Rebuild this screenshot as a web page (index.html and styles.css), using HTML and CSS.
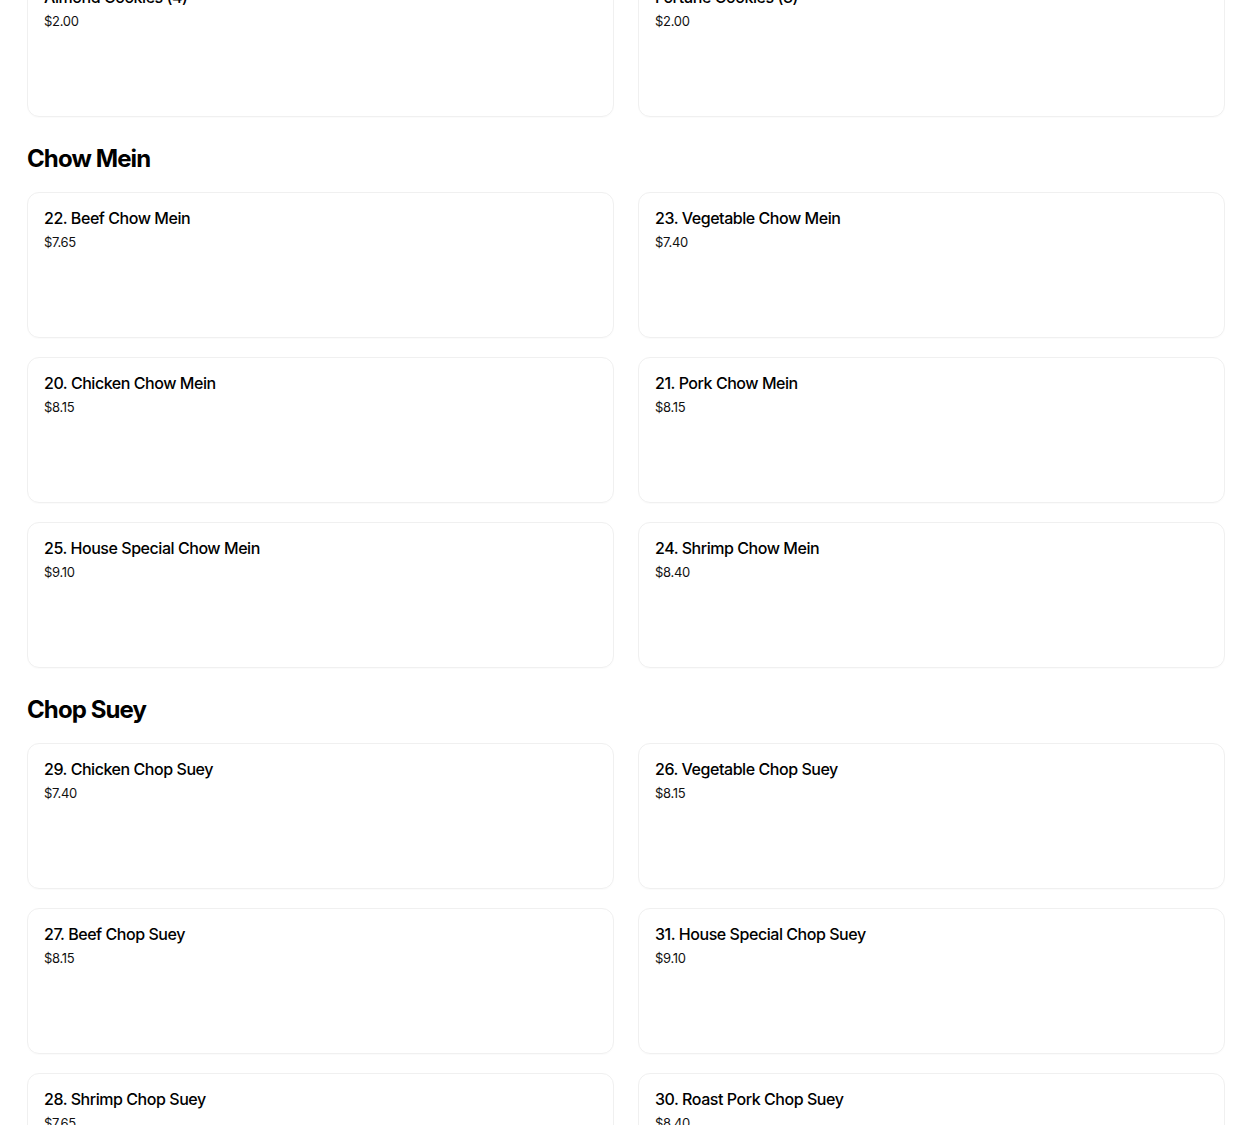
FILE: index.html
```html
<!DOCTYPE html>
<html>
<head>
<meta charset="utf-8">
<link rel="stylesheet" href="styles.css">
</head>
<body>
<main class="menu">
  <section class="section">
    <div class="grid">
      <div class="card"><div class="title">Almond Cookies (4)</div><div class="price">$2.00</div></div>
      <div class="card"><div class="title">Fortune Cookies (3)</div><div class="price">$2.00</div></div>
    </div>
  </section>
  <section class="section">
    <h2 class="heading">Chow Mein</h2>
    <div class="grid">
      <div class="card"><div class="title">22. Beef Chow Mein</div><div class="price">$7.65</div></div>
      <div class="card"><div class="title">23. Vegetable Chow Mein</div><div class="price">$7.40</div></div>
      <div class="card"><div class="title">20. Chicken Chow Mein</div><div class="price">$8.15</div></div>
      <div class="card"><div class="title">21. Pork Chow Mein</div><div class="price">$8.15</div></div>
      <div class="card"><div class="title">25. House Special Chow Mein</div><div class="price">$9.10</div></div>
      <div class="card"><div class="title">24. Shrimp Chow Mein</div><div class="price">$8.40</div></div>
    </div>
  </section>
  <section class="section">
    <h2 class="heading">Chop Suey</h2>
    <div class="grid">
      <div class="card"><div class="title">29. Chicken Chop Suey</div><div class="price">$7.40</div></div>
      <div class="card"><div class="title">26. Vegetable Chop Suey</div><div class="price">$8.15</div></div>
      <div class="card"><div class="title">27. Beef Chop Suey</div><div class="price">$8.15</div></div>
      <div class="card"><div class="title">31. House Special Chop Suey</div><div class="price">$9.10</div></div>
      <div class="card"><div class="title">28. Shrimp Chop Suey</div><div class="price">$7.65</div></div>
      <div class="card"><div class="title">30. Roast Pork Chop Suey</div><div class="price">$8.40</div></div>
    </div>
  </section>
</main>
</body>
</html>
```

FILE: styles.css
```css
html, body {
  margin: 0;
  padding: 0;
  background: #fff;
  font-family: Inter, "Liberation Sans", sans-serif;
  color: #000;
  overflow: hidden;
}

.menu {
  margin-top: -29px;
  padding: 0 25px 0 27px;
}

.heading {
  margin: 26px 0 17px;
  font-size: 24px;
  line-height: 32px;
  font-weight: 700;
  letter-spacing: -0.9px;
}

.grid {
  display: grid;
  grid-template-columns: 1fr 1fr;
  column-gap: 24px;
  row-gap: 19px;
}

.card {
  box-sizing: border-box;
  height: 146px;
  border: 1px solid #f0f0f0;
  border-radius: 12px;
  padding: 15px 16px;
  box-shadow: 0 1px 1px rgba(0,0,0,0.02);
}

.title {
  font-size: 16px;
  line-height: 20px;
  font-weight: 500;
  letter-spacing: -0.45px;
}

.price {
  margin-top: 4px;
  font-size: 13px;
  line-height: 20px;
  color: #111;
  letter-spacing: -0.3px;
}
```
